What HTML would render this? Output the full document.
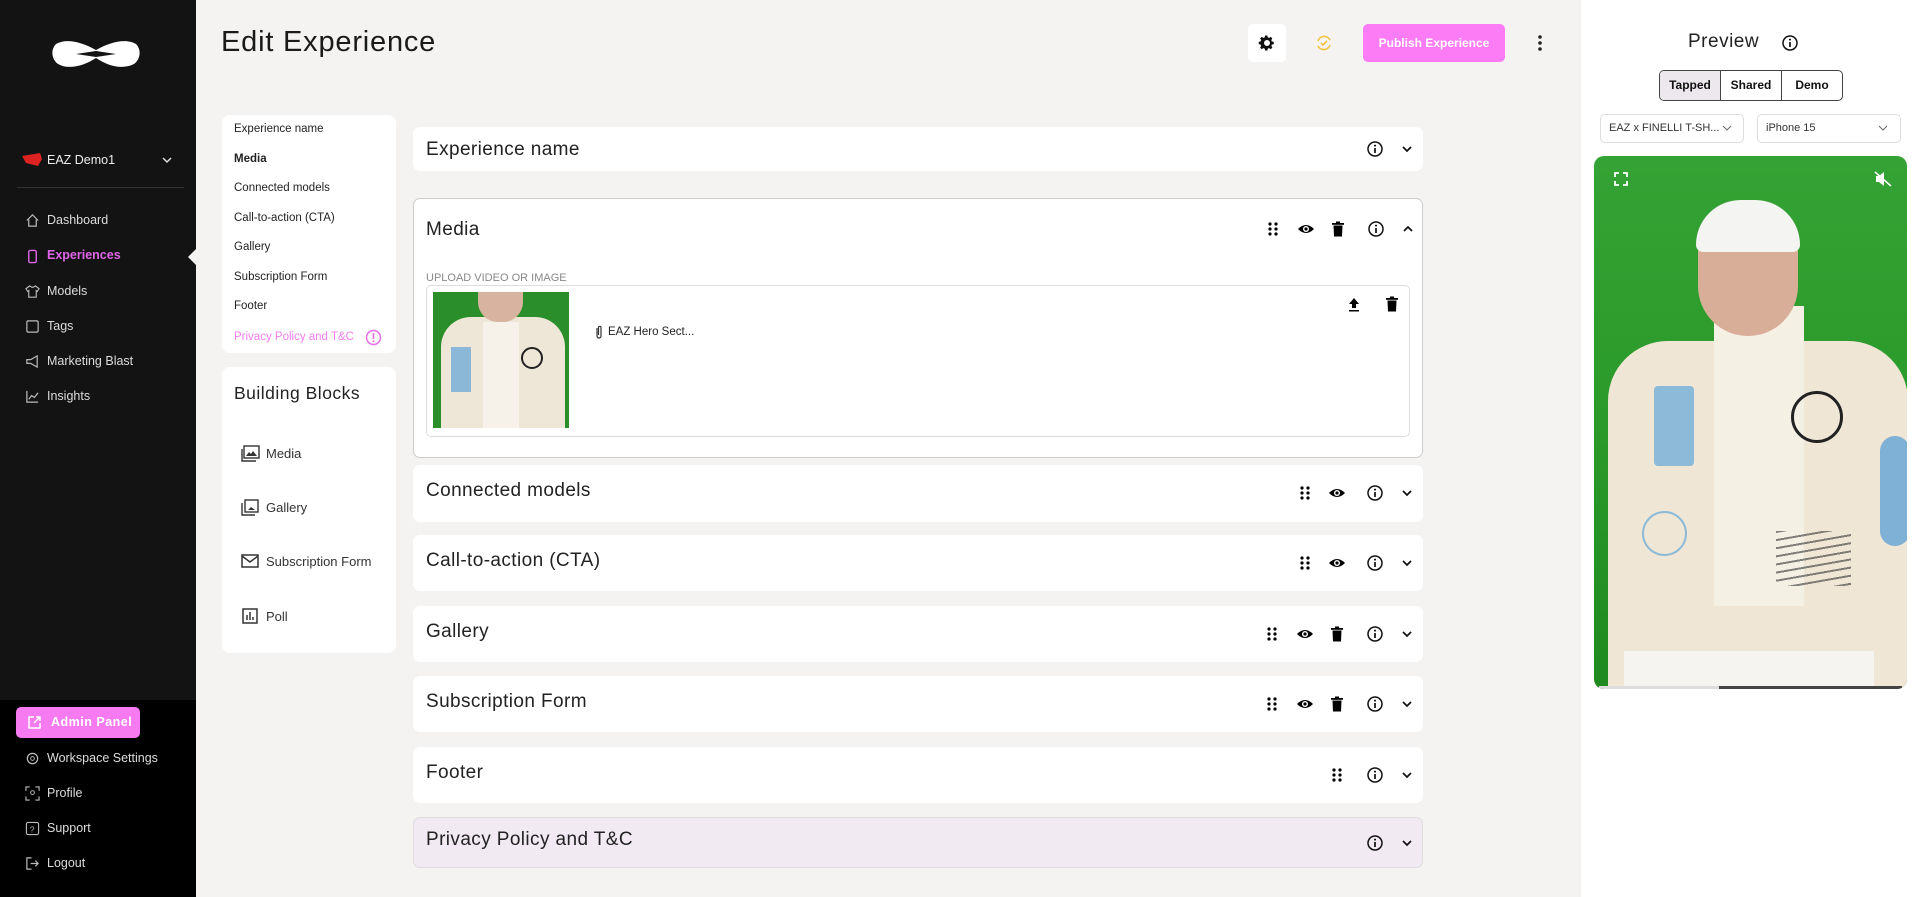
<!DOCTYPE html>
<html><head><meta charset="utf-8"><style>
*{box-sizing:border-box;margin:0;padding:0}
body{width:1920px;height:897px;overflow:hidden;background:#f4f3f2;font-family:"Liberation Sans",sans-serif;color:#111;position:relative}
.abs{position:absolute}
.side{left:0;top:0;width:196px;height:897px;background:#131313}
.sideb{left:0;top:700px;width:196px;height:197px;background:#000}
.nav{left:47px;font-size:12.5px;color:#ddd}
.navi{left:25px;width:15px;height:15px}
.card{background:#fff;border-radius:8px}
.ln{left:234px;font-size:11.5px;color:#222}
.sec{left:413px;width:1010px;background:#fff;border-radius:7px}
.sec .t{position:absolute;left:13px;font-size:19px;letter-spacing:.4px;color:#222}
.ic{position:absolute;width:18px;height:18px}
.bb{left:240px;font-size:13px;color:#333}
</style></head><body>
<div class="abs side"></div><div class="abs sideb"></div>
<!-- logo -->
<svg class="abs" style="left:50px;top:38px" width="92" height="32" viewBox="0 0 92 32"><path d="M6 6 C16 0 32 4 46 12 C60 4 76 0 86 6 C92 12 90 22 84 26 C72 32 58 28 46 20 C34 28 18 32 8 26 C2 22 0 12 6 6Z" fill="#fff"/><path d="M26 16 L46 13 L66 16 L46 19Z" fill="#131313"/></svg>
<svg class="abs" style="left:22px;top:153px" width="22" height="14"><path d="M0 3 L18 0 L20 6 L16 13 L4 10Z" fill="#d22"/></svg>
<div class="abs" style="left:47px;top:153px;font-size:12.5px;color:#eee">EAZ Demo1</div>
<svg class="abs" style="left:162px;top:156px" width="10" height="8"><path d="M1 2 L5 6 L9 2" stroke="#ddd" stroke-width="1.5" fill="none"/></svg>
<div class="abs" style="left:17px;top:187px;width:167px;height:1px;background:#333"></div>
<svg class="abs navi" style="top:213px" viewBox="0 0 16 16"><path d="M2 8 L8 2 L14 8 M4 7 V14 H12 V7" stroke="#bbb" fill="none" stroke-width="1.3"/></svg>
<div class="abs nav" style="top:213px">Dashboard</div>
<svg class="abs navi" style="top:249px" viewBox="0 0 16 16"><rect x="4" y="1.5" width="8" height="13" rx="1.5" stroke="#e065e8" fill="none" stroke-width="1.5"/></svg>
<div class="abs nav" style="top:248px;color:#e065e8;font-weight:bold">Experiences</div>
<div class="abs" style="left:188px;top:249px;width:0;height:0;border-top:8px solid transparent;border-bottom:8px solid transparent;border-right:8px solid #f4f3f2"></div>
<svg class="abs navi" style="top:284px" viewBox="0 0 16 16"><path d="M5 2 L1 5 L3 8 L4 7 V14 H12 V7 L13 8 L15 5 L11 2 Q8 5 5 2Z" stroke="#bbb" fill="none" stroke-width="1.2"/></svg>
<div class="abs nav" style="top:284px">Models</div>
<svg class="abs navi" style="top:319px" viewBox="0 0 16 16"><rect x="2" y="2" width="12" height="12" rx="1.5" stroke="#bbb" fill="none" stroke-width="1.3"/></svg>
<div class="abs nav" style="top:319px">Tags</div>
<svg class="abs navi" style="top:354px" viewBox="0 0 16 16"><path d="M2 6 H6 L13 2 V14 L6 10 H2Z" stroke="#bbb" fill="none" stroke-width="1.3"/></svg>
<div class="abs nav" style="top:354px">Marketing Blast</div>
<svg class="abs navi" style="top:389px" viewBox="0 0 16 16"><path d="M2 2 V14 H14 M4 11 L7 7 L10 9 L14 4" stroke="#bbb" fill="none" stroke-width="1.3"/></svg>
<div class="abs nav" style="top:389px">Insights</div>
<div class="abs" style="left:16px;top:707px;width:124px;height:31px;background:#f67af0;border-radius:5px;color:#fff;font-weight:bold;font-size:12.5px;line-height:31px;padding-left:35px;letter-spacing:.5px">Admin Panel</div>
<svg class="abs" style="left:27px;top:715px" width="15" height="15"><path d="M7 2 H2 V13 H13 V8 M9 2 H13 V6 M13 2 L7 8" stroke="#fff" fill="none" stroke-width="1.5"/></svg>
<svg class="abs navi" style="top:751px" viewBox="0 0 16 16"><circle cx="8" cy="8" r="5.5" stroke="#bbb" fill="none" stroke-width="1.3"/><circle cx="8" cy="8" r="2" stroke="#bbb" fill="none"/></svg>
<div class="abs nav" style="top:751px">Workspace Settings</div>
<svg class="abs navi" style="top:786px" viewBox="0 0 16 16"><path d="M1 5 V1 H5 M11 1 H15 V5 M15 11 V15 H11 M5 15 H1 V11" stroke="#bbb" fill="none" stroke-width="1.2"/><circle cx="8" cy="7" r="2" stroke="#bbb" fill="none"/></svg>
<div class="abs nav" style="top:786px">Profile</div>
<svg class="abs navi" style="top:821px" viewBox="0 0 16 16"><rect x="1.5" y="1.5" width="13" height="13" rx="2" stroke="#bbb" fill="none" stroke-width="1.2"/><text x="5" y="12" font-size="9" fill="#bbb">?</text></svg>
<div class="abs nav" style="top:821px">Support</div>
<svg class="abs navi" style="top:856px" viewBox="0 0 16 16"><path d="M7 2 H2 V14 H7 M6 8 H14 M11 5 L14 8 L11 11" stroke="#bbb" fill="none" stroke-width="1.3"/></svg>
<div class="abs nav" style="top:856px">Logout</div>

<!-- header -->
<div class="abs" style="left:221px;top:26px;font-size:29px;letter-spacing:.8px;color:#1a1a1a">Edit Experience</div>
<div class="abs" style="left:1248px;top:24px;width:38px;height:38px;background:#fff;border-radius:5px"></div>
<svg class="abs" style="left:1258px;top:34px" width="18" height="18" viewBox="0 0 24 24"><path d="M12 8a4 4 0 100 8 4 4 0 000-8zm9 5.5v-3l-2.6-.6-.7-1.7 1.4-2.3-2.1-2.1-2.3 1.4-1.7-.7L12.5 2h-3l-.6 2.5-1.7.7-2.3-1.4-2.1 2.1 1.4 2.3-.7 1.7L1 10.5v3l2.5.6.7 1.7-1.4 2.3 2.1 2.1 2.3-1.4 1.7.7.6 2.5h3l.6-2.5 1.7-.7 2.3 1.4 2.1-2.1-1.4-2.3.7-1.7z" fill="#111" fill-rule="evenodd"/></svg>
<svg class="abs" style="left:1315px;top:34px" width="18" height="18" viewBox="0 0 18 18"><path d="M3 7 A6.5 6.5 0 0 1 15 6 M15 11 A6.5 6.5 0 0 1 3 12 M6 9 L8 11 L12 7" stroke="#f2c33a" fill="none" stroke-width="1.6"/></svg>
<div class="abs" style="left:1363px;top:24px;width:142px;height:38px;background:#fc7cf6;border-radius:5px;color:#fff;font-weight:bold;font-size:12px;line-height:38px;text-align:center">Publish Experience</div>
<svg class="abs" style="left:1537px;top:34px" width="6" height="18"><circle cx="3" cy="3" r="1.8" fill="#222"/><circle cx="3" cy="9" r="1.8" fill="#222"/><circle cx="3" cy="15" r="1.8" fill="#222"/></svg>

<!-- left nav card -->
<div class="abs card" style="left:222px;top:115px;width:174px;height:238px"></div>
<div class="abs ln" style="top:123px">Experience name</div>
<div class="abs ln" style="top:153px;font-weight:bold">Media</div>
<div class="abs ln" style="top:182px">Connected models</div>
<div class="abs ln" style="top:212px">Call-to-action (CTA)</div>
<div class="abs ln" style="top:241px">Gallery</div>
<div class="abs ln" style="top:271px">Subscription Form</div>
<div class="abs ln" style="top:300px">Footer</div>
<div class="abs ln" style="top:331px;color:#f07ef0">Privacy Policy and T&amp;C</div>
<svg class="abs" style="left:365px;top:329px" width="17" height="17"><circle cx="8.5" cy="8.5" r="7" stroke="#e86ee8" stroke-width="1.5" fill="none"/><rect x="7.7" y="4" width="1.6" height="6" fill="#e86ee8"/><circle cx="8.5" cy="12.3" r="1" fill="#e86ee8"/></svg>

<div class="abs card" style="left:222px;top:367px;width:174px;height:286px"></div>
<div class="abs" style="left:234px;top:383px;font-size:17.5px;letter-spacing:.5px;color:#222">Building Blocks</div>
<svg class="abs" style="left:241px;top:445px" width="19" height="17"><rect x="3" y="1" width="15" height="12" stroke="#333" stroke-width="1.4" fill="none"/><path d="M1 4 V16 H15" stroke="#333" stroke-width="1.4" fill="none"/><path d="M5 11 L8 7 L10 9 L12 6 L16 11Z" fill="#333"/></svg>
<div class="abs bb" style="left:266px;top:446px">Media</div>
<svg class="abs" style="left:241px;top:499px" width="19" height="17"><rect x="4" y="1" width="13" height="12" stroke="#333" stroke-width="1.4" fill="none"/><path d="M1 4 V16 H14" stroke="#333" stroke-width="1.4" fill="none"/><path d="M7 11 L10 8 L14 11Z" fill="#333"/></svg>
<div class="abs bb" style="left:266px;top:500px">Gallery</div>
<svg class="abs" style="left:241px;top:554px" width="19" height="15"><rect x="1" y="1" width="16" height="12" stroke="#333" stroke-width="1.5" fill="none"/><path d="M1 2 L9 8 L17 2" stroke="#333" stroke-width="1.5" fill="none"/></svg>
<div class="abs bb" style="left:266px;top:554px">Subscription Form</div>
<svg class="abs" style="left:242px;top:608px" width="16" height="16"><rect x="1" y="1" width="14" height="14" stroke="#333" stroke-width="1.5" fill="none"/><path d="M5 12 V7 M8 12 V4 M11 12 V9" stroke="#333" stroke-width="1.5"/></svg>
<div class="abs bb" style="left:266px;top:609px">Poll</div>

<!-- sections -->
<svg width="0" height="0" style="position:absolute"><defs>
<g id="drag"><circle cx="6" cy="4" r="1.6"/><circle cx="12" cy="4" r="1.6"/><circle cx="6" cy="9" r="1.6"/><circle cx="12" cy="9" r="1.6"/><circle cx="6" cy="14" r="1.6"/><circle cx="12" cy="14" r="1.6"/></g>
<g id="eye"><path d="M1 9 Q9 1 17 9 Q9 17 1 9Z"/><circle cx="9" cy="9" r="3" fill="#fff"/><circle cx="9" cy="9" r="1.6"/></g>
<g id="trash"><rect x="3" y="3" width="12" height="1.8"/><rect x="7" y="1.5" width="4" height="2"/><path d="M4.5 5.5 H13.5 L13 16.5 H5Z"/></g>
<g id="info"><circle cx="9" cy="9" r="7" fill="none" stroke="#111" stroke-width="1.5"/><rect x="8.2" y="8" width="1.6" height="5"/><circle cx="9" cy="5.6" r="1"/></g>
<g id="chev"><path d="M5 7 L9 11 L13 7" stroke="#111" stroke-width="1.7" fill="none"/></g>
<g id="chevu"><path d="M5 11 L9 7 L13 11" stroke="#111" stroke-width="1.7" fill="none"/></g>
</defs></svg>

<div class="abs sec" style="top:127px;height:44px"><div class="t" style="top:12px">Experience name</div>
<svg class="ic" style="left:953px;top:13px"><use href="#info"/></svg><svg class="ic" style="left:985px;top:13px"><use href="#chev"/></svg></div>

<div class="abs sec" style="top:198px;height:260px;border:1px solid #ccc"><div class="t" style="top:20px;left:12px">Media</div>
<svg class="ic" style="left:850px;top:21px"><use href="#drag"/></svg><svg class="ic" style="left:883px;top:21px"><use href="#eye"/></svg><svg class="ic" style="left:915px;top:21px"><use href="#trash"/></svg><svg class="ic" style="left:953px;top:21px"><use href="#info"/></svg><svg class="ic" style="left:985px;top:21px"><use href="#chevu"/></svg>
<div style="position:absolute;left:12px;top:73px;font-size:11px;color:#888">UPLOAD VIDEO OR IMAGE</div>
<div style="position:absolute;left:12px;top:86px;width:984px;height:152px;border:1px solid #ddd;border-radius:5px">
<div style="position:absolute;left:6px;top:6px;width:136px;height:136px;background:#2a8f2a;overflow:hidden">
<div style="position:absolute;left:8px;top:25px;width:124px;height:120px;background:#eee6d6;border-radius:30px 30px 0 0"></div>
<div style="position:absolute;left:45px;top:-10px;width:45px;height:40px;background:#d8b4a0;border-radius:0 0 20px 20px"></div>
<div style="position:absolute;left:50px;top:30px;width:36px;height:110px;background:#f6f2ea"></div>
<div style="position:absolute;left:18px;top:55px;width:20px;height:45px;background:#8cb8d8"></div>
<div style="position:absolute;left:88px;top:55px;width:22px;height:22px;border:2px solid #222;border-radius:50%"></div></div>
<svg style="position:absolute;left:167px;top:38px" width="10" height="16"><path d="M3 4 V12 A2 2 0 0 0 7 12 V3 A1.5 1.5 0 0 0 4.5 3 V11" stroke="#333" fill="none" stroke-width="1.2"/></svg>
<div style="position:absolute;left:181px;top:40px;font-size:11.5px;color:#222">EAZ Hero Sect...</div>
<svg class="ic" style="left:918px;top:9px"><path d="M9 3 L14 9 H11 V13 H7 V9 H4Z M4 15 H14 V16.5 H4Z"/></svg>
<svg class="ic" style="left:956px;top:9px"><use href="#trash"/></svg>
</div></div>

<div class="abs sec" style="top:465px;height:57px"><div class="t" style="top:15px">Connected models</div>
<svg class="ic" style="left:883px;top:19px"><use href="#drag"/></svg><svg class="ic" style="left:915px;top:19px"><use href="#eye"/></svg><svg class="ic" style="left:953px;top:19px"><use href="#info"/></svg><svg class="ic" style="left:985px;top:19px"><use href="#chev"/></svg></div>

<div class="abs sec" style="top:535px;height:56px"><div class="t" style="top:15px">Call-to-action (CTA)</div>
<svg class="ic" style="left:883px;top:19px"><use href="#drag"/></svg><svg class="ic" style="left:915px;top:19px"><use href="#eye"/></svg><svg class="ic" style="left:953px;top:19px"><use href="#info"/></svg><svg class="ic" style="left:985px;top:19px"><use href="#chev"/></svg></div>

<div class="abs sec" style="top:606px;height:56px"><div class="t" style="top:15px">Gallery</div>
<svg class="ic" style="left:850px;top:19px"><use href="#drag"/></svg><svg class="ic" style="left:883px;top:19px"><use href="#eye"/></svg><svg class="ic" style="left:915px;top:19px"><use href="#trash"/></svg><svg class="ic" style="left:953px;top:19px"><use href="#info"/></svg><svg class="ic" style="left:985px;top:19px"><use href="#chev"/></svg></div>

<div class="abs sec" style="top:676px;height:56px"><div class="t" style="top:15px">Subscription Form</div>
<svg class="ic" style="left:850px;top:19px"><use href="#drag"/></svg><svg class="ic" style="left:883px;top:19px"><use href="#eye"/></svg><svg class="ic" style="left:915px;top:19px"><use href="#trash"/></svg><svg class="ic" style="left:953px;top:19px"><use href="#info"/></svg><svg class="ic" style="left:985px;top:19px"><use href="#chev"/></svg></div>

<div class="abs sec" style="top:747px;height:56px"><div class="t" style="top:15px">Footer</div>
<svg class="ic" style="left:915px;top:19px"><use href="#drag"/></svg><svg class="ic" style="left:953px;top:19px"><use href="#info"/></svg><svg class="ic" style="left:985px;top:19px"><use href="#chev"/></svg></div>

<div class="abs sec" style="top:817px;height:51px;background:#f1eaf2;border:1px solid #ddd"><div class="t" style="top:11px;left:12px">Privacy Policy and T&amp;C</div>
<svg class="ic" style="left:952px;top:16px"><use href="#info"/></svg><svg class="ic" style="left:984px;top:16px"><use href="#chev"/></svg></div>

<!-- right panel -->
<div class="abs" style="left:1581px;top:0;width:339px;height:897px;background:#fff"></div>
<div class="abs" style="left:1688px;top:31px;font-size:19px;letter-spacing:.5px;color:#222">Preview</div>
<svg class="abs" style="left:1781px;top:34px" width="18" height="18"><use href="#info"/></svg>
<div class="abs" style="left:1659px;top:70px;width:184px;height:31px;border:1.5px solid #444;border-radius:5px;overflow:hidden;display:flex;font-size:12px;font-weight:bold">
<div style="width:61px;background:#ede8ee;text-align:center;line-height:28px;border-right:1.5px solid #444">Tapped</div>
<div style="width:61px;text-align:center;line-height:28px;border-right:1.5px solid #444">Shared</div>
<div style="flex:1;text-align:center;line-height:28px">Demo</div></div>
<div class="abs" style="left:1600px;top:114px;width:144px;height:29px;border:1px solid #ddd;border-radius:5px;font-size:11px;line-height:27px;padding-left:8px;color:#333">EAZ x FINELLI T-SH...</div>
<svg class="abs" style="left:1722px;top:124px" width="10" height="8"><path d="M1 2 L5 6 L9 2" stroke="#666" fill="none"/></svg>
<div class="abs" style="left:1757px;top:114px;width:144px;height:29px;border:1px solid #ddd;border-radius:5px;font-size:11px;line-height:27px;padding-left:8px;color:#333">iPhone 15</div>
<svg class="abs" style="left:1878px;top:124px" width="10" height="8"><path d="M1 2 L5 6 L9 2" stroke="#666" fill="none"/></svg>

<div class="abs" style="left:1594px;top:156px;width:313px;height:533px;border-radius:10px;overflow:hidden;background:linear-gradient(180deg,#34a234 0%,#2a9a2a 50%,#1f8a1f 100%)">
<div style="position:absolute;left:14px;top:185px;width:300px;height:350px;background:#efe6d6;border-radius:60px 60px 0 0"></div>
<div style="position:absolute;left:120px;top:150px;width:90px;height:300px;background:#f5f0e4"></div>
<div style="position:absolute;left:104px;top:60px;width:100px;height:120px;background:#d9ae98;border-radius:35px 35px 50px 50px"></div>
<div style="position:absolute;left:102px;top:44px;width:104px;height:52px;background:#f4f4f2;border-radius:50px 50px 8px 8px"></div>
<div style="position:absolute;left:60px;top:230px;width:40px;height:80px;background:#8cbad8;border-radius:4px"></div>
<div style="position:absolute;left:197px;top:235px;width:52px;height:52px;border:3px solid #222;border-radius:50%"></div>
<div style="position:absolute;left:48px;top:355px;width:45px;height:45px;border:2px solid #8cbad8;border-radius:50%"></div>
<div style="position:absolute;left:286px;top:280px;width:30px;height:110px;background:#7fb0d6;border-radius:15px"></div>
<div style="position:absolute;left:182px;top:375px;width:75px;height:55px;background:repeating-linear-gradient(170deg,#333 0 2px,transparent 2px 8px);opacity:.6"></div>
<div style="position:absolute;left:30px;top:495px;width:250px;height:40px;background:#f6f4f0"></div>
<div style="position:absolute;left:5px;top:530px;width:303px;height:3px;background:#444"></div>
<div style="position:absolute;left:5px;top:530px;width:120px;height:3px;background:#ddd"></div>
<svg style="position:absolute;left:20px;top:16px" width="14" height="14"><path d="M1 5 V1 H5 M9 1 H13 V5 M13 9 V13 H9 M5 13 H1 V9" stroke="#fff" stroke-width="1.8" fill="none"/></svg>
<svg style="position:absolute;left:280px;top:15px" width="18" height="16"><path d="M2 5 H5 L10 1 V15 L5 11 H2Z" fill="#fff"/><path d="M1 1 L17 15" stroke="#fff" stroke-width="1.6"/></svg>
</div>
</body></html>
